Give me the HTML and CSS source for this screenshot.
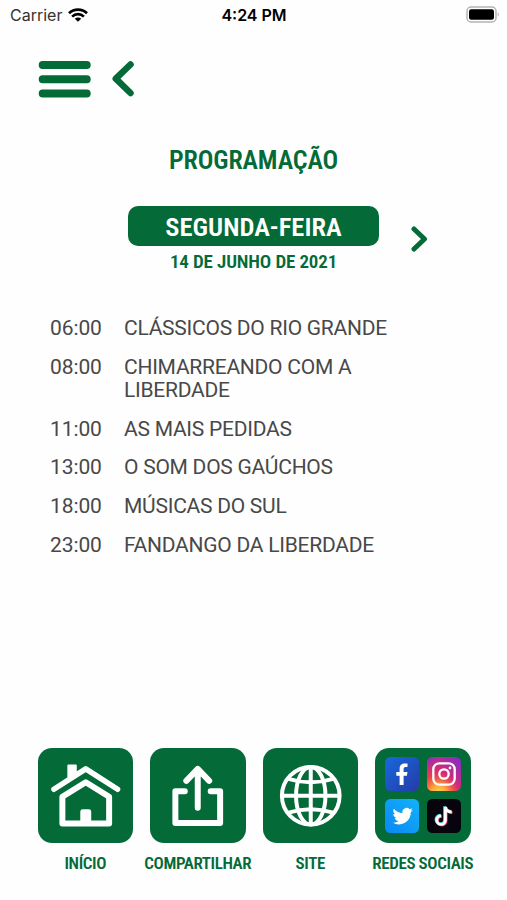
FILE: index.html
```html
<!DOCTYPE html>
<html lang="pt-BR">
<head>
    <meta charset="UTF-8">
    <meta name="viewport" content="width=device-width, initial-scale=1.0">
    <title>Programação</title>
    <link rel="stylesheet" href="styles.css">
</head>
<body>
    <div class="status-bar">
        <div class="carrier">
            <span>Carrier</span>
            <svg width="20" height="14" viewBox="0 0 20 14" fill="none" stroke="#000" stroke-width="2.7">
                <path d="M1 5.2a13 13 0 0 1 18 0"/>
                <path d="M4.1 8.6a8.5 8.5 0 0 1 11.8 0"/>
                <path d="M10 13.8 6.8 10.7a4.6 4.6 0 0 1 6.4 0z" fill="#000" stroke="none"/>
            </svg>
        </div>
        <div class="clock">4:24 PM</div>
        <svg class="battery" width="34" height="17" viewBox="0 0 34 17">
            <rect x="1" y="1" width="29" height="15" rx="4" fill="none" stroke="#b4b4b4" stroke-width="1.5"/>
            <rect x="3" y="3.2" width="25" height="10.6" rx="2.2"/>
            <path d="M31.7 6.5c1.6.6 1.6 3.4 0 4z" fill="#b4b4b4"/>
        </svg>
    </div>

    <div class="toolbar">
        <svg width="54" height="38" viewBox="0 0 54 38" stroke="#046a38" stroke-width="8" stroke-linecap="round">
            <path d="M4.7 5h44M4.7 19.3h44M4.7 33.5h44"/>
        </svg>
        <svg width="24" height="38" viewBox="0 0 24 38" fill="none" stroke="#046a38" stroke-width="6.5" stroke-linecap="round" stroke-linejoin="round">
            <path d="M19.5 4.5 4.8 18.7 19.5 33"/>
        </svg>
    </div>

    <h1>PROGRAMAÇÃO</h1>

    <div class="day">
        <div class="day-info">
            <div class="weekday">SEGUNDA-FEIRA</div>
            <div class="date">14 DE JUNHO DE 2021</div>
        </div>
        <svg class="next" width="18" height="28" viewBox="0 0 18 28" fill="none" stroke="#046a38" stroke-width="5" stroke-linecap="round" stroke-linejoin="round">
            <path d="M4 4 14.5 14 4 24"/>
        </svg>
    </div>

    <div class="schedule">
        <div class="row"><span class="time">06:00</span><span class="show">CLÁSSICOS DO RIO GRANDE</span></div>
        <div class="row"><span class="time">08:00</span><span class="show">CHIMARREANDO COM A LIBERDADE</span></div>
        <div class="row"><span class="time">11:00</span><span class="show">AS MAIS PEDIDAS</span></div>
        <div class="row"><span class="time">13:00</span><span class="show">O SOM DOS GAÚCHOS</span></div>
        <div class="row"><span class="time">18:00</span><span class="show">MÚSICAS DO SUL</span></div>
        <div class="row"><span class="time">23:00</span><span class="show">FANDANGO DA LIBERDADE</span></div>
    </div>

    <div class="nav">
        <div class="nav-item">
            <div class="tile">
                <svg viewBox="0 0 96 96" fill="none" stroke="#fff" stroke-width="6">
                    <path d="M30.5 29V17.5h7.5V24z" fill="#fff" stroke-width="2" stroke-linejoin="round"/>
                    <path d="M16 41.5 48 21 80 41.5" stroke-width="5.5" stroke-linecap="round" stroke-linejoin="round"/>
                    <path d="M24.5 49 48 34.5l23.5 14.5v27h-47z" stroke-linejoin="round"/>
                    <path d="M42.5 78V64q0-2.5 2.5-2.5h6q2.5 0 2.5 2.5v14z" fill="#fff" stroke="none"/>
                </svg>
            </div>
            <div class="label">INÍCIO</div>
        </div>
        <div class="nav-item">
            <div class="tile">
                <svg viewBox="0 0 96 96" fill="none" stroke="#fff" stroke-width="6" stroke-linecap="round" stroke-linejoin="round">
                    <path d="M35 43.5H25.5V75.5h45V43.5H61"/>
                    <path d="M48 60V22M36.5 33 48 21l11.5 12"/>
                </svg>
            </div>
            <div class="label">COMPARTILHAR</div>
        </div>
        <div class="nav-item">
            <div class="tile">
                <svg viewBox="0 0 96 96" fill="none" stroke="#fff" stroke-width="4">
                    <circle cx="48" cy="48" r="29"/>
                    <ellipse cx="48" cy="48" rx="14.8" ry="29"/>
                    <path d="M48 19v58M19 48h58"/>
                    <path d="M25.5 31q22.5 7 45 0M25.5 65q22.5-7 45 0"/>
                </svg>
            </div>
            <div class="label">SITE</div>
        </div>
        <div class="nav-item">
            <div class="tile social">
                <svg viewBox="0 0 34 34">
                    <defs>
                        <linearGradient id="fb" x1="0" y1="0" x2="1" y2="1">
                            <stop offset="0" stop-color="#1769dc"/>
                            <stop offset="1" stop-color="#263ba8"/>
                        </linearGradient>
                    </defs>
                    <rect width="34" height="34" rx="5.5" fill="url(#fb)"/>
                    <path d="M14.6 28v-9.3h-3.3v-3.7h3.3v-3c0-4 2.1-5.6 5.3-5.6 1.4 0 2.6.2 2.6.2v3.5h-1.7c-1.7 0-2.2.8-2.2 2.1v2.8h3.9l-.6 3.7h-3.3v9.3z" fill="#fff"/>
                </svg>
                <svg viewBox="0 0 34 34">
                    <defs>
                        <linearGradient id="igBase" x1="0" y1="1" x2="1" y2="0">
                            <stop offset="0" stop-color="#f34b32"/>
                            <stop offset=".5" stop-color="#d62976"/>
                            <stop offset="1" stop-color="#7a2fd0"/>
                        </linearGradient>
                        <radialGradient id="igGlow" cx=".35" cy="1.05" r=".6">
                            <stop offset="0" stop-color="#ffd84c"/>
                            <stop offset=".4" stop-color="#fda23a"/>
                            <stop offset="1" stop-color="#f5593a" stop-opacity="0"/>
                        </radialGradient>
                        <radialGradient id="igBlue" cx="0" cy="0" r=".5">
                            <stop offset="0" stop-color="#6a35c8"/>
                            <stop offset="1" stop-color="#c52d90" stop-opacity="0"/>
                        </radialGradient>
                    </defs>
                    <rect width="34" height="34" rx="5.5" fill="url(#igBase)"/>
                    <rect width="34" height="34" rx="5.5" fill="url(#igBlue)"/>
                    <rect width="34" height="34" rx="5.5" fill="url(#igGlow)"/>
                    <rect x="6.3" y="6.3" width="21.4" height="21.4" rx="6" fill="none" stroke="#fff" stroke-width="2.3"/>
                    <circle cx="17" cy="17" r="4.7" fill="none" stroke="#fff" stroke-width="2.3"/>
                    <circle cx="23" cy="11" r="1.4" fill="#fff"/>
                </svg>
                <svg viewBox="0 0 34 34">
                    <defs>
                        <linearGradient id="tw" x1="0" y1="1" x2="1" y2="0">
                            <stop offset="0" stop-color="#0a86f5"/>
                            <stop offset="1" stop-color="#12b4f8"/>
                        </linearGradient>
                    </defs>
                    <rect width="34" height="34" rx="5.5" fill="url(#tw)"/>
                    <path transform="translate(7.5 7) scale(.85)" fill="#fff" d="M23.95 4.57a10 10 0 0 1-2.82.77 4.96 4.96 0 0 0 2.16-2.72c-.95.55-2 .96-3.13 1.18a4.92 4.92 0 0 0-8.38 4.48C7.69 8.09 4.07 6.13 1.64 3.16a4.82 4.82 0 0 0-.67 2.48c0 1.71.87 3.21 2.19 4.1a4.9 4.9 0 0 1-2.23-.62v.06a4.92 4.92 0 0 0 3.95 4.83 5 5 0 0 1-2.21.08 4.94 4.94 0 0 0 4.6 3.42A9.87 9.87 0 0 1 0 19.54a13.99 13.99 0 0 0 7.55 2.21c9.05 0 14-7.5 14-13.98 0-.21 0-.42-.02-.63a9.94 9.94 0 0 0 2.42-2.57z"/>
                </svg>
                <svg viewBox="0 0 34 34" fill="none" stroke-width="2.9">
                    <rect width="34" height="34" rx="5.5" fill="#08040d"/>
                    <path d="M17.6 7.3v13.2a4.3 4.3 0 1 1-4.3-4.3M17.6 7.3c.4 3.2 2.8 5 6.3 5.1" stroke="#25e5e0"/>
                    <path d="M19.2 8.5v13.2a4.3 4.3 0 1 1-4.3-4.3M19.2 8.5c.4 3.2 2.8 5 6.3 5.1" stroke="#f32d5c"/>
                    <path d="M18.4 7.9v13.2a4.3 4.3 0 1 1-4.3-4.3M18.4 7.9c.4 3.2 2.8 5 6.3 5.1" stroke="#fff"/>
                </svg>
            </div>
            <div class="label">REDES SOCIAIS</div>
        </div>
    </div>
</body>
</html>
```
FILE: styles.css
```css
:root {
    --green: #046a38;
    --text: #484848;
}

* {
    box-sizing: border-box;
    margin: 0;
    padding: 0;
}

body {
    font-family: 'Roboto Condensed', Roboto, sans-serif;
    background: #fefefe;
    color: var(--green);
    height: 900px;
    display: flex;
    flex-direction: column;
    overflow: hidden;
}

svg {
    display: block;
}

.status-bar {
    height: 30px;
    padding: 0 7px 0 10px;
    display: grid;
    grid-template-columns: 1fr auto 1fr;
    align-items: center;
    font-family: Inter, sans-serif;
    font-size: 16px;
    color: #000;
}

.carrier {
    display: flex;
    align-items: center;
    gap: 6px;
    color: #333;
}

.clock {
    font-weight: 600;
    margin-right: 2px;
}

.battery {
    justify-self: end;
    margin-top: -2px;
}

.toolbar {
    display: flex;
    gap: 19px;
    padding: 30px 0 0 38px;
}

h1 {
    margin-top: 47px;
    text-align: center;
    font-size: 26px;
    line-height: 30px;
    font-weight: 600;
    letter-spacing: -0.1px;
}

.day {
    display: flex;
    margin: 31px 0 0 128px;
}

.day-info {
    width: 251px;
    text-align: center;
}

.weekday {
    height: 40px;
    line-height: 42px;
    background: var(--green);
    border-radius: 10px;
    color: #fff;
    font-size: 26.5px;
    font-weight: 600;
}

.date {
    font-size: 19px;
    line-height: 31px;
    font-weight: 600;
    letter-spacing: -0.15px;
}

.next {
    margin: 19px 0 0 31px;
}

.schedule {
    margin: 40px 0 0 50px;
    display: flex;
    flex-direction: column;
    gap: 15px;
    color: var(--text);
    font-family: Roboto, sans-serif;
    font-size: 21px;
    line-height: 23.6px;
    letter-spacing: -0.25px;
}

.row {
    display: flex;
}

.time {
    width: 74px;
    letter-spacing: -0.1px;
}

.show {
    width: 280px;
}

.nav {
    display: grid;
    grid-template-columns: repeat(4, 95.5px);
    gap: 17px;
    margin: auto 0 26px 37.5px;
}

.nav-item {
    display: flex;
    flex-direction: column;
    align-items: center;
}

.tile {
    width: 95.5px;
    height: 95.5px;
    background: var(--green);
    border-radius: 14px;
}

.social {
    display: grid;
    grid-template-columns: 34px 34px;
    gap: 8px;
    place-content: center;
}

.label {
    margin-top: 9px;
    font-size: 17px;
    line-height: 22px;
    font-weight: 600;
    white-space: nowrap;
    letter-spacing: -0.4px;
}
```
